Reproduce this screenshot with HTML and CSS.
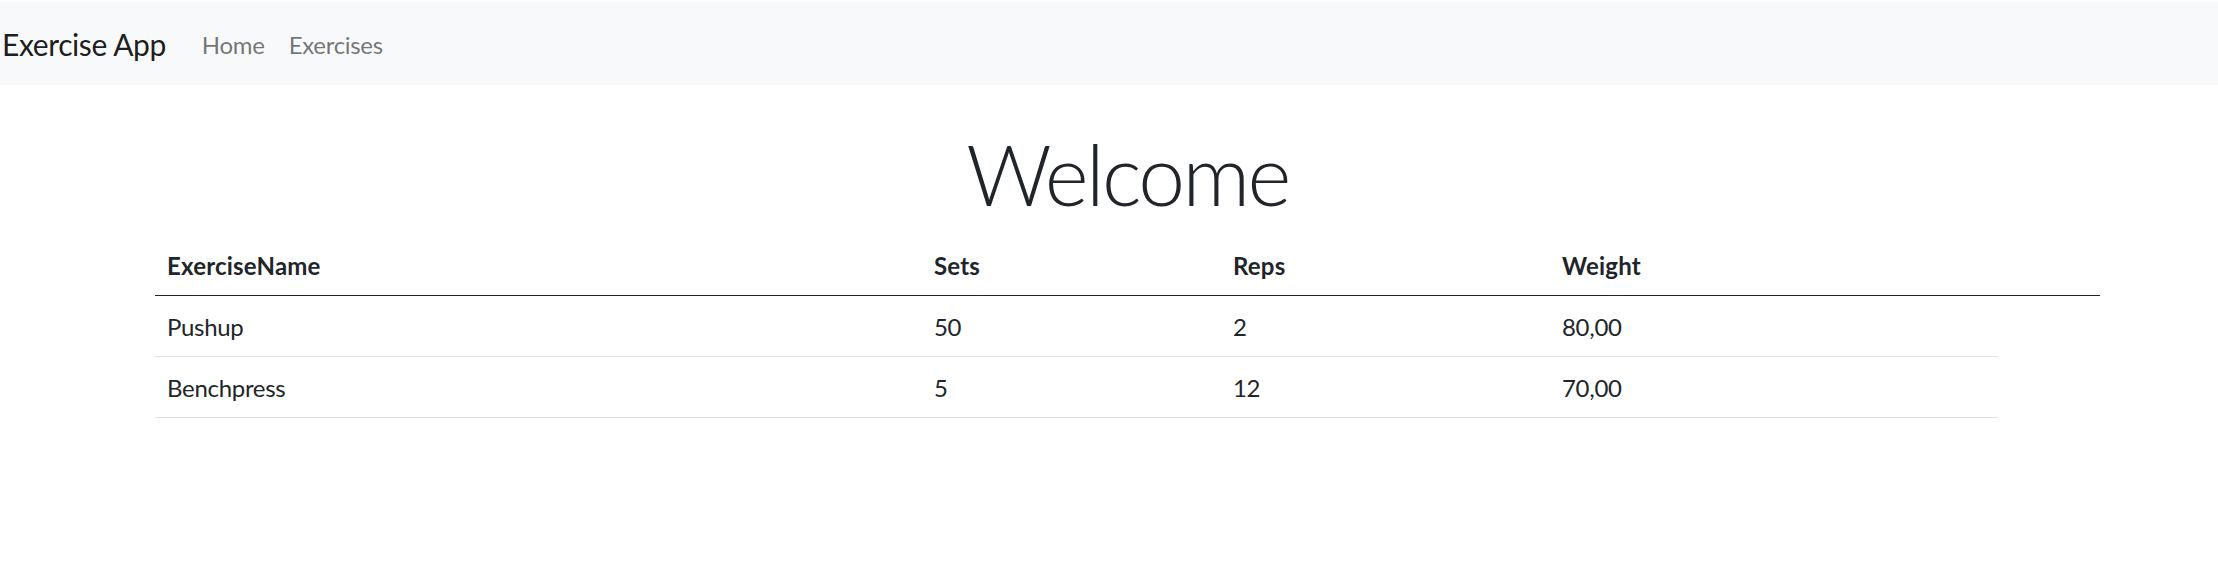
FILE: index.html
```html
<!DOCTYPE html>
<html lang="en">
<head>
<meta charset="utf-8">
<title>Exercise App</title>
<link rel="stylesheet" href="styles.css">
</head>
<body>
<header class="navbar">
  <a class="brand" href="#">Exercise App</a>
  <nav class="nav">
    <a class="nav-link" href="#">Home</a>
    <a class="nav-link" href="#">Exercises</a>
  </nav>
</header>
<main class="container">
  <h1 class="display">Welcome</h1>
  <table class="table">
    <thead>
      <tr>
        <th class="col-name">ExerciseName</th>
        <th class="col-sets">Sets</th>
        <th class="col-reps">Reps</th>
        <th class="col-weight">Weight</th>
        <th class="col-actions"></th>
      </tr>
    </thead>
    <tbody>
      <tr>
        <td>Pushup</td>
        <td>50</td>
        <td>2</td>
        <td>80,00</td>
      </tr>
      <tr>
        <td>Benchpress</td>
        <td>5</td>
        <td>12</td>
        <td>70,00</td>
      </tr>
    </tbody>
  </table>
</main>
</body>
</html>
```
FILE: styles.css
```css
html, body {
  margin: 0;
  padding: 0;
  background: #fff;
}

body {
  padding-top: 2px;
  font-family: Lato, "Liberation Sans", sans-serif;
  font-size: 24px;
  line-height: 36px;
  color: #212529;
}

.navbar {
  display: flex;
  align-items: center;
  box-sizing: border-box;
  height: 83px;
  padding: 2px 0 0 2px;
  background: #f8f9fa;
}

.brand {
  font-size: 30px;
  line-height: 45px;
  letter-spacing: -0.4px;
  color: rgba(0, 0, 0, 0.9);
  text-decoration: none;
  margin-right: 24px;
}

.nav {
  display: flex;
  align-items: center;
}

.nav-link {
  padding: 0 12px;
  font-size: 24px;
  line-height: 36px;
  letter-spacing: -0.3px;
  color: rgba(0, 0, 0, 0.55);
  text-decoration: none;
}

.container {
  width: 1945px;
  margin-left: 155px;
}

.display {
  margin: 39px 0 10px;
  font-size: 84px;
  line-height: 100.8px;
  font-weight: 300;
  letter-spacing: -2.6px;
  text-align: center;
}

.table {
  width: 100%;
  border-collapse: collapse;
}

.table th,
.table td {
  padding: 13px 12px 11px;
  text-align: left;
  vertical-align: top;
}

.table th {
  font-weight: 700;
  letter-spacing: 0.2px;
  border-bottom: 1px solid #212529;
}

.table td {
  border-bottom: 1px solid #dee2e6;
  letter-spacing: -0.3px;
}

.col-name { width: 743px; }
.col-sets { width: 275px; }
.col-reps { width: 305px; }
.col-weight { width: 424px; }
.col-actions { width: 78px; }
```
